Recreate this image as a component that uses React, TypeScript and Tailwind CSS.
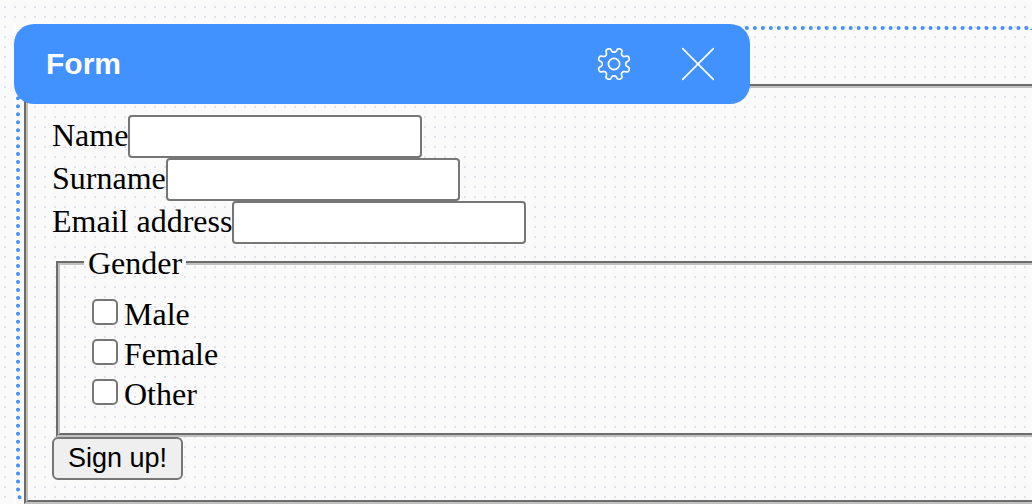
import { useId } from "react";

// Outline of an eight-toothed gear with rounded teeth, centred on 0,0.
function gearPath(): string {
  const points: string[] = [];
  for (let i = 0; i < 320; i++) {
    const t = (i / 320) * Math.PI * 2;
    const wave = -Math.cos(8 * t);
    const r = 14 + 2.2 * (Math.tanh(wave) / Math.tanh(1));
    const a = t + 0.025 * Math.sin(16 * t);
    points.push(`${(r * Math.cos(a)).toFixed(2)} ${(r * Math.sin(a)).toFixed(2)}`);
  }
  return `M${points.join("L")}Z`;
}

const GEAR = gearPath();

function GearIcon() {
  return (
    <svg viewBox="-18 -18 36 36" className="size-9" fill="none" stroke="white" strokeWidth="1.7" strokeLinejoin="round" aria-hidden="true">
      <path d={GEAR} />
      <circle r="5.6" />
    </svg>
  );
}

function CloseIcon() {
  return (
    <svg viewBox="0 0 36 36" className="size-9" fill="none" stroke="white" strokeWidth="1.7" strokeLinecap="round" aria-hidden="true">
      <path d="M2.7 2.7L33.3 33.3M33.3 2.7L2.7 33.3" />
    </svg>
  );
}

function TextField({ label, type = "text" }: { label: string; type?: string }) {
  const id = useId();
  return (
    <div className="flex items-center">
      <label htmlFor={id} className="pb-1 leading-9">{label}</label>
      <input id={id} type={type} className="h-[43px] w-[294px] rounded-[4px] border-2 border-[#767676] bg-white px-1 font-['Liberation_Sans',sans-serif] text-[27px]" />
    </div>
  );
}

function CheckField({ label }: { label: string }) {
  const id = useId();
  return (
    <div className="flex h-10 items-center gap-1.5 pl-2">
      <input id={id} type="checkbox" className="size-[26px] appearance-none rounded-[5px] border-2 border-[#767676] bg-white checked:bg-[#4191ff]" />
      <label htmlFor={id} className="pt-1 leading-9">{label}</label>
    </div>
  );
}

export default function App() {
  return (
    <div className="relative min-h-screen overflow-hidden bg-[#fafafa] bg-[conic-gradient(from_270deg_at_2px_2px,#e0e0ea_90deg,transparent_0)] bg-[length:10px_10px] bg-[position:4px_6px] pt-6 pl-3.5 font-['Liberation_Serif',serif] text-[32px] text-black">
      <div className="border-t-2 border-l-2 border-white">
        <div className="flex flex-col rounded-l-[12px] border-4 border-r-0 border-dotted border-[#4191ff] pt-[54px] pl-1">
          <form className="relative -mb-1" onSubmit={(e) => e.preventDefault()}>
            <fieldset className="border-4 border-r-0 border-[#c0c0c0] [border-style:groove] pt-[27px] pb-5 pl-6">
              <TextField label="Name" />
              <TextField label="Surname" />
              <TextField label="Email address" type="email" />
              <fieldset className="ml-1 border-4 border-r-0 border-[#c0c0c0] [border-style:groove] pt-2.5 pb-[21px] pl-6">
                <legend className="px-1 leading-[38px]">Gender</legend>
                <CheckField label="Male" />
                <CheckField label="Female" />
                <CheckField label="Other" />
              </fieldset>
              <button type="submit" className="block h-[43px] rounded-[6px] border-2 border-[#767676] bg-[#efefef] px-3.5 pb-0.5 font-['Liberation_Sans',sans-serif] text-[27px] leading-8">
                Sign up!
              </button>
            </fieldset>
          </form>
        </div>
      </div>
      <header className="absolute top-6 left-3.5 flex h-20 w-[736px] items-center rounded-[20px] bg-[#4191ff] pr-[34px] pl-8 text-white">
        <h1 className="flex-1 pb-0.5 font-['Liberation_Sans',sans-serif] text-[30px] font-bold">Form</h1>
        <div className="flex items-center gap-12">
          <button type="button" aria-label="Settings"><GearIcon /></button>
          <button type="button" aria-label="Close"><CloseIcon /></button>
        </div>
      </header>
    </div>
  );
}
